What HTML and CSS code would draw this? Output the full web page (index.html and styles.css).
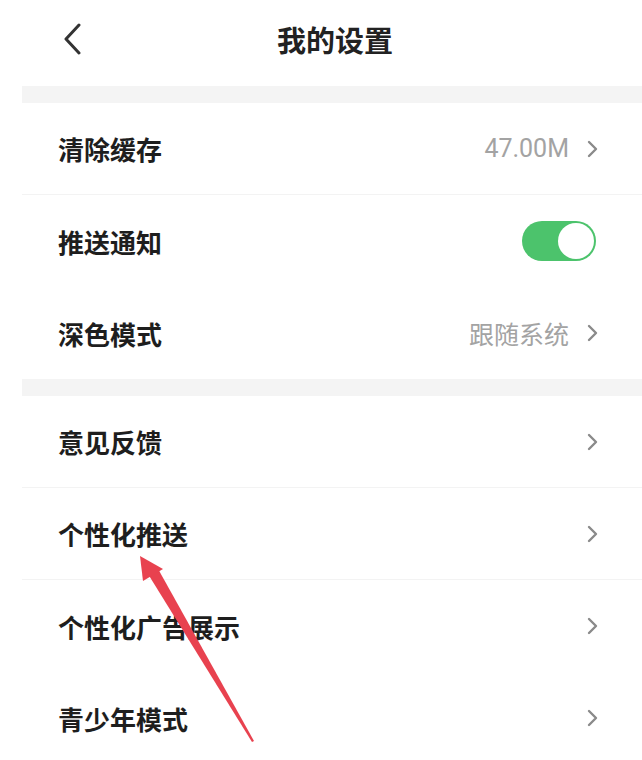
FILE: index.html
```html
<!DOCTYPE html>
<html lang="zh-CN">
<head>
<meta charset="utf-8">
<title>我的设置</title>
<link rel="stylesheet" href="styles.css">
</head>
<body>
<div class="page">
  <header class="header">
    <svg class="back" width="20" height="32" viewBox="0 0 20 32"><path d="M17 2 L4 16 L17 30" fill="none" stroke="#333" stroke-width="3" stroke-linecap="round" stroke-linejoin="round"/></svg>
    <h1 class="title">我的设置</h1>
  </header>
  <div class="band"></div>
  <section class="group">
    <div class="row sep"><span class="label">清除缓存</span><span class="value latin">47.00M</span><svg class="chev" width="11" height="18" viewBox="0 0 11 18"><path d="M2 2 L9 9 L2 16" fill="none" stroke="#8a8a8a" stroke-width="2.4" stroke-linecap="round" stroke-linejoin="round"/></svg></div>
    <div class="row"><span class="label">推送通知</span><span class="toggle"><span class="knob"></span></span></div>
    <div class="row"><span class="label">深色模式</span><span class="value">跟随系统</span><svg class="chev" width="11" height="18" viewBox="0 0 11 18"><path d="M2 2 L9 9 L2 16" fill="none" stroke="#8a8a8a" stroke-width="2.4" stroke-linecap="round" stroke-linejoin="round"/></svg></div>
  </section>
  <div class="band"></div>
  <section class="group">
    <div class="row sep"><span class="label">意见反馈</span><svg class="chev" width="11" height="18" viewBox="0 0 11 18"><path d="M2 2 L9 9 L2 16" fill="none" stroke="#8a8a8a" stroke-width="2.4" stroke-linecap="round" stroke-linejoin="round"/></svg></div>
    <div class="row sep"><span class="label">个性化推送</span><svg class="chev" width="11" height="18" viewBox="0 0 11 18"><path d="M2 2 L9 9 L2 16" fill="none" stroke="#8a8a8a" stroke-width="2.4" stroke-linecap="round" stroke-linejoin="round"/></svg></div>
    <div class="row"><span class="label">个性化广告展示</span><svg class="chev" width="11" height="18" viewBox="0 0 11 18"><path d="M2 2 L9 9 L2 16" fill="none" stroke="#8a8a8a" stroke-width="2.4" stroke-linecap="round" stroke-linejoin="round"/></svg></div>
    <div class="row"><span class="label">青少年模式</span><svg class="chev" width="11" height="18" viewBox="0 0 11 18"><path d="M2 2 L9 9 L2 16" fill="none" stroke="#8a8a8a" stroke-width="2.4" stroke-linecap="round" stroke-linejoin="round"/></svg></div>
  </section>
</div>
<svg class="annot" width="642" height="760" viewBox="0 0 642 760">
  <polygon points="148,574 157,567 254,741 252,742" fill="#e8424f"/>
  <polygon points="140,556 143,581 163,569" fill="#e8424f"/>
</svg>
</body>
</html>
```
FILE: styles.css
```css
html, body {
  margin: 0;
  padding: 0;
  background: #fff;
}
body {
  width: 642px;
  height: 760px;
  overflow: hidden;
  position: relative;
  font-family: "Noto Sans CJK SC", "Noto Sans", sans-serif;
}
.page {
  margin-left: 22px;
}
.header {
  height: 86px;
  display: flex;
  align-items: center;
  position: relative;
  padding-left: 40px;
  box-sizing: border-box;
  padding-bottom: 8px;
}
.back {
  display: block;
}
.title {
  margin: 0;
  flex: 1;
  text-align: center;
  font-size: 29px;
  font-weight: 700;
  color: #222;
  padding-right: 54px;
  letter-spacing: 0;
}
.band {
  height: 17px;
  background: #f4f4f4;
}
.row {
  height: 92px;
  box-sizing: border-box;
  display: flex;
  align-items: center;
  padding: 0 44px 0 36px;
}
.row.sep {
  border-bottom: 1px solid #f3f3f3;
}
.label {
  flex: 1;
  font-size: 26px;
  font-weight: 700;
  color: #1e1e1e;
}
.value {
  font-size: 25px;
  color: #a3a3a3;
  margin-right: 18px;
}
.value.latin {
  font-family: Roboto, "Noto Sans", sans-serif;
}
.chev {
  display: block;
}
.toggle {
  width: 74px;
  height: 40px;
  border-radius: 20px;
  background: #4cc36c;
  display: flex;
  align-items: center;
  justify-content: flex-end;
  padding: 0 2px;
  box-sizing: border-box;
  margin-right: 2px;
}
.knob {
  width: 36px;
  height: 36px;
  border-radius: 50%;
  background: #fff;
}
.annot {
  position: absolute;
  left: 0;
  top: 0;
  pointer-events: none;
}
```
